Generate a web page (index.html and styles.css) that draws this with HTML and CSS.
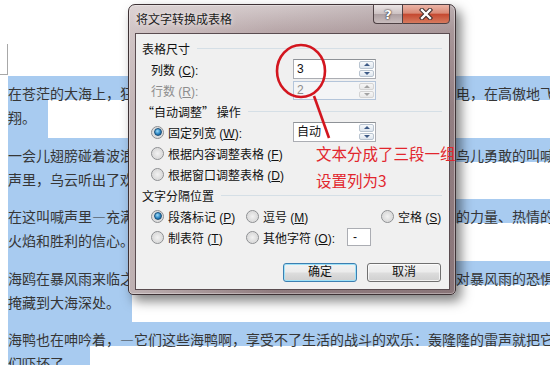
FILE: index.html
```html
<!DOCTYPE html>
<html lang="zh-CN">

<head>
    <meta charset="UTF-8">
    <title>将文字转换成表格</title>
    <link rel="stylesheet" href="styles.css">
</head>

<body>
    <div class="page">
        <!-- 文档正文（已选中） -->
        <div class="doc">
            <div class="mark"></div>
            <div class="para">
                <div class="ln">在苍茫的大海上，狂风卷集着乌云。在乌云和大海之间，海燕像黑色的闪电，在高傲地飞</div>
                <div class="ln end">翔。</div>
            </div>
            <div class="para">
                <div class="ln">一会儿翅膀碰着波浪，一会儿箭一般地直冲向乌云，它叫喊着，—就在这鸟儿勇敢的叫喊</div>
                <div class="ln end">声里，乌云听出了欢乐。</div>
            </div>
            <div class="para">
                <div class="ln">在这叫喊声里—充满着对暴风雨的渴望！在这叫喊声里，乌云听出了愤怒的力量、热情的</div>
                <div class="ln end">火焰和胜利的信心。</div>
            </div>
            <div class="para">
                <div class="ln">海鸥在暴风雨来临之前呻吟着，—呻吟着，它们在大海上飞窜，想把自己对暴风雨的恐惧，</div>
                <div class="ln end">掩藏到大海深处。</div>
            </div>
            <div class="para">
                <div class="ln">海鸭也在呻吟着，—它们这些海鸭啊，享受不了生活的战斗的欢乐：轰隆隆的雷声就把它</div>
                <div class="ln end">们吓坏了。</div>
            </div>
        </div>

        <!-- 对话框 -->
        <div class="dialog">
            <div class="titlebar">
                <span class="title">将文字转换成表格</span>
                <div class="caps">
                    <span class="cap help">?</span>
                    <span class="cap close">
                        <svg width="14" height="12" viewBox="0 0 14 12">
                            <path d="M3 2 L11 10 M11 2 L3 10" stroke="#3a2a28" stroke-width="4.4" stroke-linecap="square" />
                            <path d="M3 2 L11 10 M11 2 L3 10" stroke="#fff" stroke-width="2.4" stroke-linecap="square" />
                        </svg>
                    </span>
                </div>
            </div>
            <div class="client">
                <div class="group"><span>表格尺寸</span><i class="rule"></i></div>
                <div class="row">
                    <span class="lbl">列数 (<u>C</u>):</span>
                    <div class="spin">
                        <span class="val">3</span>
                        <span class="arrows"><b class="up"></b><b class="down"></b></span>
                    </div>
                </div>
                <div class="row">
                    <span class="lbl off">行数 (<u>R</u>):</span>
                    <div class="spin off">
                        <span class="val">2</span>
                        <span class="arrows"><b class="up"></b><b class="down"></b></span>
                    </div>
                </div>
                <div class="group"><span class="cjk">“自动调整” 操作</span><i class="rule"></i></div>
                <div class="row">
                    <label class="opt wide"><i class="radio on"></i><span>固定列宽 (<u>W</u>):</span></label>
                    <div class="spin">
                        <span class="val">自动</span>
                        <span class="arrows"><b class="up"></b><b class="down"></b></span>
                    </div>
                </div>
                <div class="row">
                    <label class="opt"><i class="radio"></i><span>根据内容调整表格 (<u>F</u>)</span></label>
                </div>
                <div class="row">
                    <label class="opt"><i class="radio"></i><span>根据窗口调整表格 (<u>D</u>)</span></label>
                </div>
                <div class="group"><span>文字分隔位置</span><i class="rule"></i></div>
                <div class="row">
                    <label class="opt c1"><i class="radio on"></i><span>段落标记 (<u>P</u>)</span></label>
                    <label class="opt c2"><i class="radio"></i><span>逗号 (<u>M</u>)</span></label>
                    <label class="opt"><i class="radio"></i><span>空格 (<u>S</u>)</span></label>
                </div>
                <div class="row">
                    <label class="opt c1"><i class="radio"></i><span>制表符 (<u>T</u>)</span></label>
                    <label class="opt c2 other"><i class="radio"></i><span>其他字符 (<u>O</u>):</span><span class="chr">-</span></label>
                </div>
                <div class="actions">
                    <span class="btn default">确定</span>
                    <span class="btn">取消</span>
                </div>
            </div>
        </div>

        <!-- 红色标注 -->
        <svg class="annot" width="550" height="365" viewBox="0 0 550 365">
            <ellipse cx="301" cy="71" rx="24" ry="26" fill="none" stroke="#d3161f" stroke-width="2.6" />
            <path d="M314 96 L329 138" stroke="#d3161f" stroke-width="2.6" />
        </svg>
        <div class="note">文本分成了三段一组<br>设置列为3</div>
    </div>
</body>

</html>
```

FILE: styles.css
```css
* {
    margin: 0;
    padding: 0;
}

body {
    font-family: "Noto Sans CJK SC", "Noto Sans", sans-serif;
    background: #fff;
}

.page {
    width: 550px;
    height: 365px;
    position: relative;
    overflow: hidden;
    background: #fff;
}

/* 文档 */
.doc .mark {
    width: 7px;
    height: 30px;
    margin: 44px 0 1px;
    border-right: 1px solid #a8a8a8;
    border-bottom: 1px solid #a8a8a8;
}

.para {
    padding-left: 8px;
}

.ln {
    height: 14px;
    padding-top: 10px;
    font-size: 14px;
    line-height: 14px;
    color: #363636;
    white-space: nowrap;
    background: #a8cbf0;
}

.ln.end {
    width: fit-content;
    padding-right: 12px;
    padding-bottom: 13.5px;
}

/* 对话框 */
.dialog {
    position: absolute;
    left: 128px;
    top: 4px;
    width: 328px;
    height: 291px;
    box-sizing: border-box;
    padding: 0 5px 4px 6px;
    border: 1px solid #3e3235;
    border-radius: 7px 7px 5px 5px;
    background:
        linear-gradient(90deg, rgba(230, 222, 222, 0.55), rgba(255, 255, 255, 0) 45%, rgba(120, 100, 104, 0.25)),
        linear-gradient(180deg, #d3c9ca 0%, #b8a7a9 9%, #9c888b 35%, #8f7b7e 100%);
    box-shadow: inset 0 0 0 1px rgba(255, 255, 255, 0.35), 5px 6px 12px rgba(0, 0, 0, 0.5);
    display: flex;
    flex-direction: column;
    font-family: "Liberation Sans", "Noto Sans CJK SC", sans-serif;
    font-size: 12px;
    color: #111;
}

.cjk {
    font-family: "Noto Sans CJK SC", sans-serif;
}

.titlebar {
    height: 28px;
    display: flex;
    align-items: flex-start;
}

.title {
    margin: 7px 0 0 1px;
    line-height: 16px;
    font-size: 12px;
    color: #1a1a1a;
    text-shadow: 0 0 5px rgba(255, 255, 255, 0.9);
}

.caps {
    margin: -1px 0 0 auto;
    display: flex;
    height: 20px;
}

.cap {
    height: 20px;
    box-sizing: border-box;
    border: 1px solid #4e4144;
    display: flex;
    align-items: center;
    justify-content: center;
}

.cap.help {
    width: 29px;
    border-right: none;
    border-radius: 0 0 0 4px;
    background: linear-gradient(#ebe5e5 0%, #cdc2c3 48%, #ad9fa1 52%, #c9bdbe 100%);
    color: #fff;
    font: bold 13px "DejaVu Sans", sans-serif;
    text-shadow: 0 0 2px #2c2224, 0 0 1px #2c2224;
}

.cap.close {
    width: 48px;
    border-radius: 0 0 4px 0;
    background: linear-gradient(#ebb4a6 0%, #d98a76 45%, #c54a31 52%, #d77a5e 100%);
}

.client {
    flex: 1;
    background: #f0f0f0;
    border: 1px solid #5a4c50;
    padding-top: 3.5px;
}

.group {
    height: 21px;
    display: flex;
    align-items: center;
    padding-left: 6px;
    gap: 7px;
}

.group .rule {
    flex: 1;
    height: 1px;
    margin-right: 7px;
    background: #d5dfe6;
}

.row {
    height: 21px;
    display: flex;
    align-items: center;
    padding-left: 15px;
}

.lbl {
    width: 142px;
}

.off {
    color: #8d8d8d;
}

u {
    text-decoration-thickness: 1px;
    text-underline-offset: 1px;
}

/* 数值框 */
.spin {
    width: 83px;
    height: 20px;
    box-sizing: border-box;
    display: flex;
    border: 1px solid #abadb3;
    border-top-color: #8e9297;
    background: #fff;
}

.spin .val {
    flex: 1;
    padding-left: 3px;
    line-height: 18px;
}

.spin .arrows {
    width: 15px;
    padding: 1px;
    display: flex;
    flex-direction: column;
    gap: 1px;
}

.spin .arrows b {
    flex: 1;
    border: 1px solid #b9c4d0;
    border-radius: 2px;
    background: linear-gradient(#f7f9fb, #dde5ee);
    display: flex;
    align-items: center;
    justify-content: center;
}

.spin .arrows b::after {
    content: "";
    border-left: 3px solid transparent;
    border-right: 3px solid transparent;
}

.spin .up::after {
    border-bottom: 3px solid #3d5a86;
}

.spin .down::after {
    border-top: 3px solid #3d5a86;
}

.spin.off {
    height: 19px;
    border-color: #b4c5da;
    background: #f4f5f6;
}

.spin.off .val {
    color: #8d8d8d;
    line-height: 17px;
}

.spin.off .arrows b {
    border-color: #d4d4d4;
    background: linear-gradient(#f6f6f6, #e8e8e8);
}

.spin.off .up::after {
    border-bottom-color: #a3a3a3;
}

.spin.off .down::after {
    border-top-color: #a3a3a3;
}

/* 单选框 */
.opt {
    display: flex;
    align-items: center;
    gap: 4px;
    white-space: nowrap;
}

.opt.wide {
    width: 142px;
}

.opt.c1 {
    width: 95px;
}

.opt.c2 {
    width: 135px;
}

.opt.other {
    width: 125px;
}

.radio {
    width: 13px;
    height: 13px;
    box-sizing: border-box;
    border-radius: 50%;
    border: 1px solid #8c8e91;
    background: radial-gradient(circle at 50% 50%, #f2f2f2 0%, #dcdcdc 60%, #f7f7f7 100%);
    display: flex;
    align-items: center;
    justify-content: center;
    flex: none;
}

.radio.on::after {
    content: "";
    width: 6px;
    height: 6px;
    border-radius: 50%;
    background: radial-gradient(circle at 40% 35%, #9fdcf9 0%, #2b86c4 55%, #0e4d7d 100%);
    border: 0.5px solid #1b4f79;
}

.chr {
    margin-left: auto;
    width: 24px;
    height: 18px;
    box-sizing: border-box;
    border: 1px solid #abadb3;
    background: #fff;
    padding-left: 5px;
    line-height: 16px;
}

/* 按钮 */
.actions {
    margin-top: 15.5px;
    display: flex;
    justify-content: flex-end;
    gap: 10px;
    padding-right: 8px;
}

.btn {
    width: 74px;
    height: 19px;
    box-sizing: border-box;
    border: 1px solid #707070;
    border-radius: 3px;
    background: linear-gradient(#f2f2f2 0%, #ebebeb 48%, #dddddd 52%, #cfcfcf 100%);
    box-shadow: inset 0 0 0 1px rgba(255, 255, 255, 0.7);
    text-align: center;
    line-height: 17px;
}

.btn.default {
    border-color: #3c7fb1;
    box-shadow: inset 0 0 0 1px #9fe1f7;
}

/* 标注 */
.annot {
    position: absolute;
    left: 0;
    top: 0;
    pointer-events: none;
}

.note {
    position: absolute;
    left: 316px;
    top: 139.5px;
    font-size: 15.5px;
    line-height: 27px;
    color: #e2262d;
    white-space: nowrap;
}
```
